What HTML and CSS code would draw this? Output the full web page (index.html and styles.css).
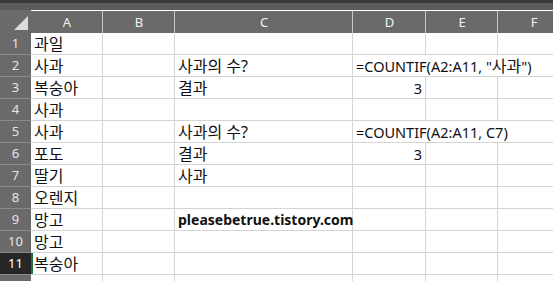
FILE: index.html
```html
<!DOCTYPE html>
<html lang="ko">
<head>
    <meta charset="UTF-8">
    <title>COUNTIF</title>
    <link rel="stylesheet" href="styles.css">
</head>
<body>
    <div class="topbar"></div>
    <div class="sheet">
        <div class="corner"><span class="tri"></span></div>
        <div class="colhead">A</div>
        <div class="colhead">B</div>
        <div class="colhead">C</div>
        <div class="colhead">D</div>
        <div class="colhead">E</div>
        <div class="colhead">F</div>

        <div class="rowhead">1</div>
        <div class="cell ko">과일</div><div class="cell"></div><div class="cell"></div><div class="cell"></div><div class="cell"></div><div class="cell"></div>

        <div class="rowhead">2</div>
        <div class="cell ko">사과</div><div class="cell"></div><div class="cell ko">사과의 수?</div><div class="cell span3">=COUNTIF(A2:A11, "<span class="ko">사과</span>")</div>

        <div class="rowhead">3</div>
        <div class="cell ko">복숭아</div><div class="cell"></div><div class="cell ko">결과</div><div class="cell num">3</div><div class="cell"></div><div class="cell"></div>

        <div class="rowhead">4</div>
        <div class="cell ko">사과</div><div class="cell"></div><div class="cell"></div><div class="cell"></div><div class="cell"></div><div class="cell"></div>

        <div class="rowhead">5</div>
        <div class="cell ko">사과</div><div class="cell"></div><div class="cell ko">사과의 수?</div><div class="cell span3">=COUNTIF(A2:A11, C7)</div>

        <div class="rowhead">6</div>
        <div class="cell ko">포도</div><div class="cell"></div><div class="cell ko">결과</div><div class="cell num">3</div><div class="cell"></div><div class="cell"></div>

        <div class="rowhead">7</div>
        <div class="cell ko">딸기</div><div class="cell"></div><div class="cell ko">사과</div><div class="cell"></div><div class="cell"></div><div class="cell"></div>

        <div class="rowhead">8</div>
        <div class="cell ko">오렌지</div><div class="cell"></div><div class="cell"></div><div class="cell"></div><div class="cell"></div><div class="cell"></div>

        <div class="rowhead">9</div>
        <div class="cell ko">망고</div><div class="cell"></div><div class="cell bold">pleasebetrue.tistory.com</div><div class="cell"></div><div class="cell"></div><div class="cell"></div>

        <div class="rowhead">10</div>
        <div class="cell ko">망고</div><div class="cell"></div><div class="cell"></div><div class="cell"></div><div class="cell"></div><div class="cell"></div>

        <div class="rowhead active">11</div>
        <div class="cell ko current">복숭아</div><div class="cell"></div><div class="cell"></div><div class="cell"></div><div class="cell"></div><div class="cell"></div>

        <div class="rowhead"></div>
        <div class="cell"></div><div class="cell"></div><div class="cell"></div><div class="cell"></div><div class="cell"></div><div class="cell"></div>
    </div>
</body>
</html>
```

FILE: styles.css
```css
body {
    margin: 0;
    width: 553px;
    height: 281px;
    overflow: hidden;
    background-color: #fff;
    font-family: "Noto Sans", "Noto Sans CJK KR", sans-serif;
}
.topbar {
    height: 10px;
    background-color: #5c5c5c;
    border-top: 3px solid #3a3a3a;
    box-sizing: border-box;
}
.sheet {
    display: grid;
    grid-template-columns: 31px 72px 72px 178px 73px 72px 72px;
    grid-auto-rows: 22px;
    grid-template-rows: 23px;
    width: 600px;
}
.corner {
    background-color: #6a6a6a;
    position: relative;
}
.tri {
    position: absolute;
    right: 3px;
    bottom: 3px;
    width: 0;
    height: 0;
    border-left: 14px solid transparent;
    border-bottom: 14px solid #dcdcdc;
}
.colhead {
    background-color: #6a6a6a;
    color: #f2f2f2;
    font-size: 13px;
    text-align: center;
    line-height: 22px;
    border-left: 1px solid #c9c9c9;
    margin-left: -1px;
    margin-top: 1px;
}
.colhead:nth-child(2) {
    border-left-color: #6a6a6a;
}
.rowhead {
    background-color: #6a6a6a;
    color: #e6e6e6;
    font-size: 13px;
    text-align: center;
    line-height: 21px;
    border-bottom: 1px solid #8a8a8a;
}
.rowhead.active {
    background-color: #262626;
    color: #fff;
}
.cell {
    box-sizing: border-box;
    border-right: 1px solid #d4d4d4;
    border-bottom: 1px solid #d4d4d4;
    padding: 0 3px;
    font-size: 14.5px;
    line-height: 22px;
    color: #111;
    white-space: nowrap;
}
.ko {
    font-size: 16px;
}
.cell .ko {
    line-height: 1;
}
.span3 {
    grid-column: span 3;
}
.num {
    text-align: right;
}
.bold {
    font-weight: bold;
    font-size: 14px;
}
.current {
    box-shadow: inset 2px 0 0 #217346;
}
```
